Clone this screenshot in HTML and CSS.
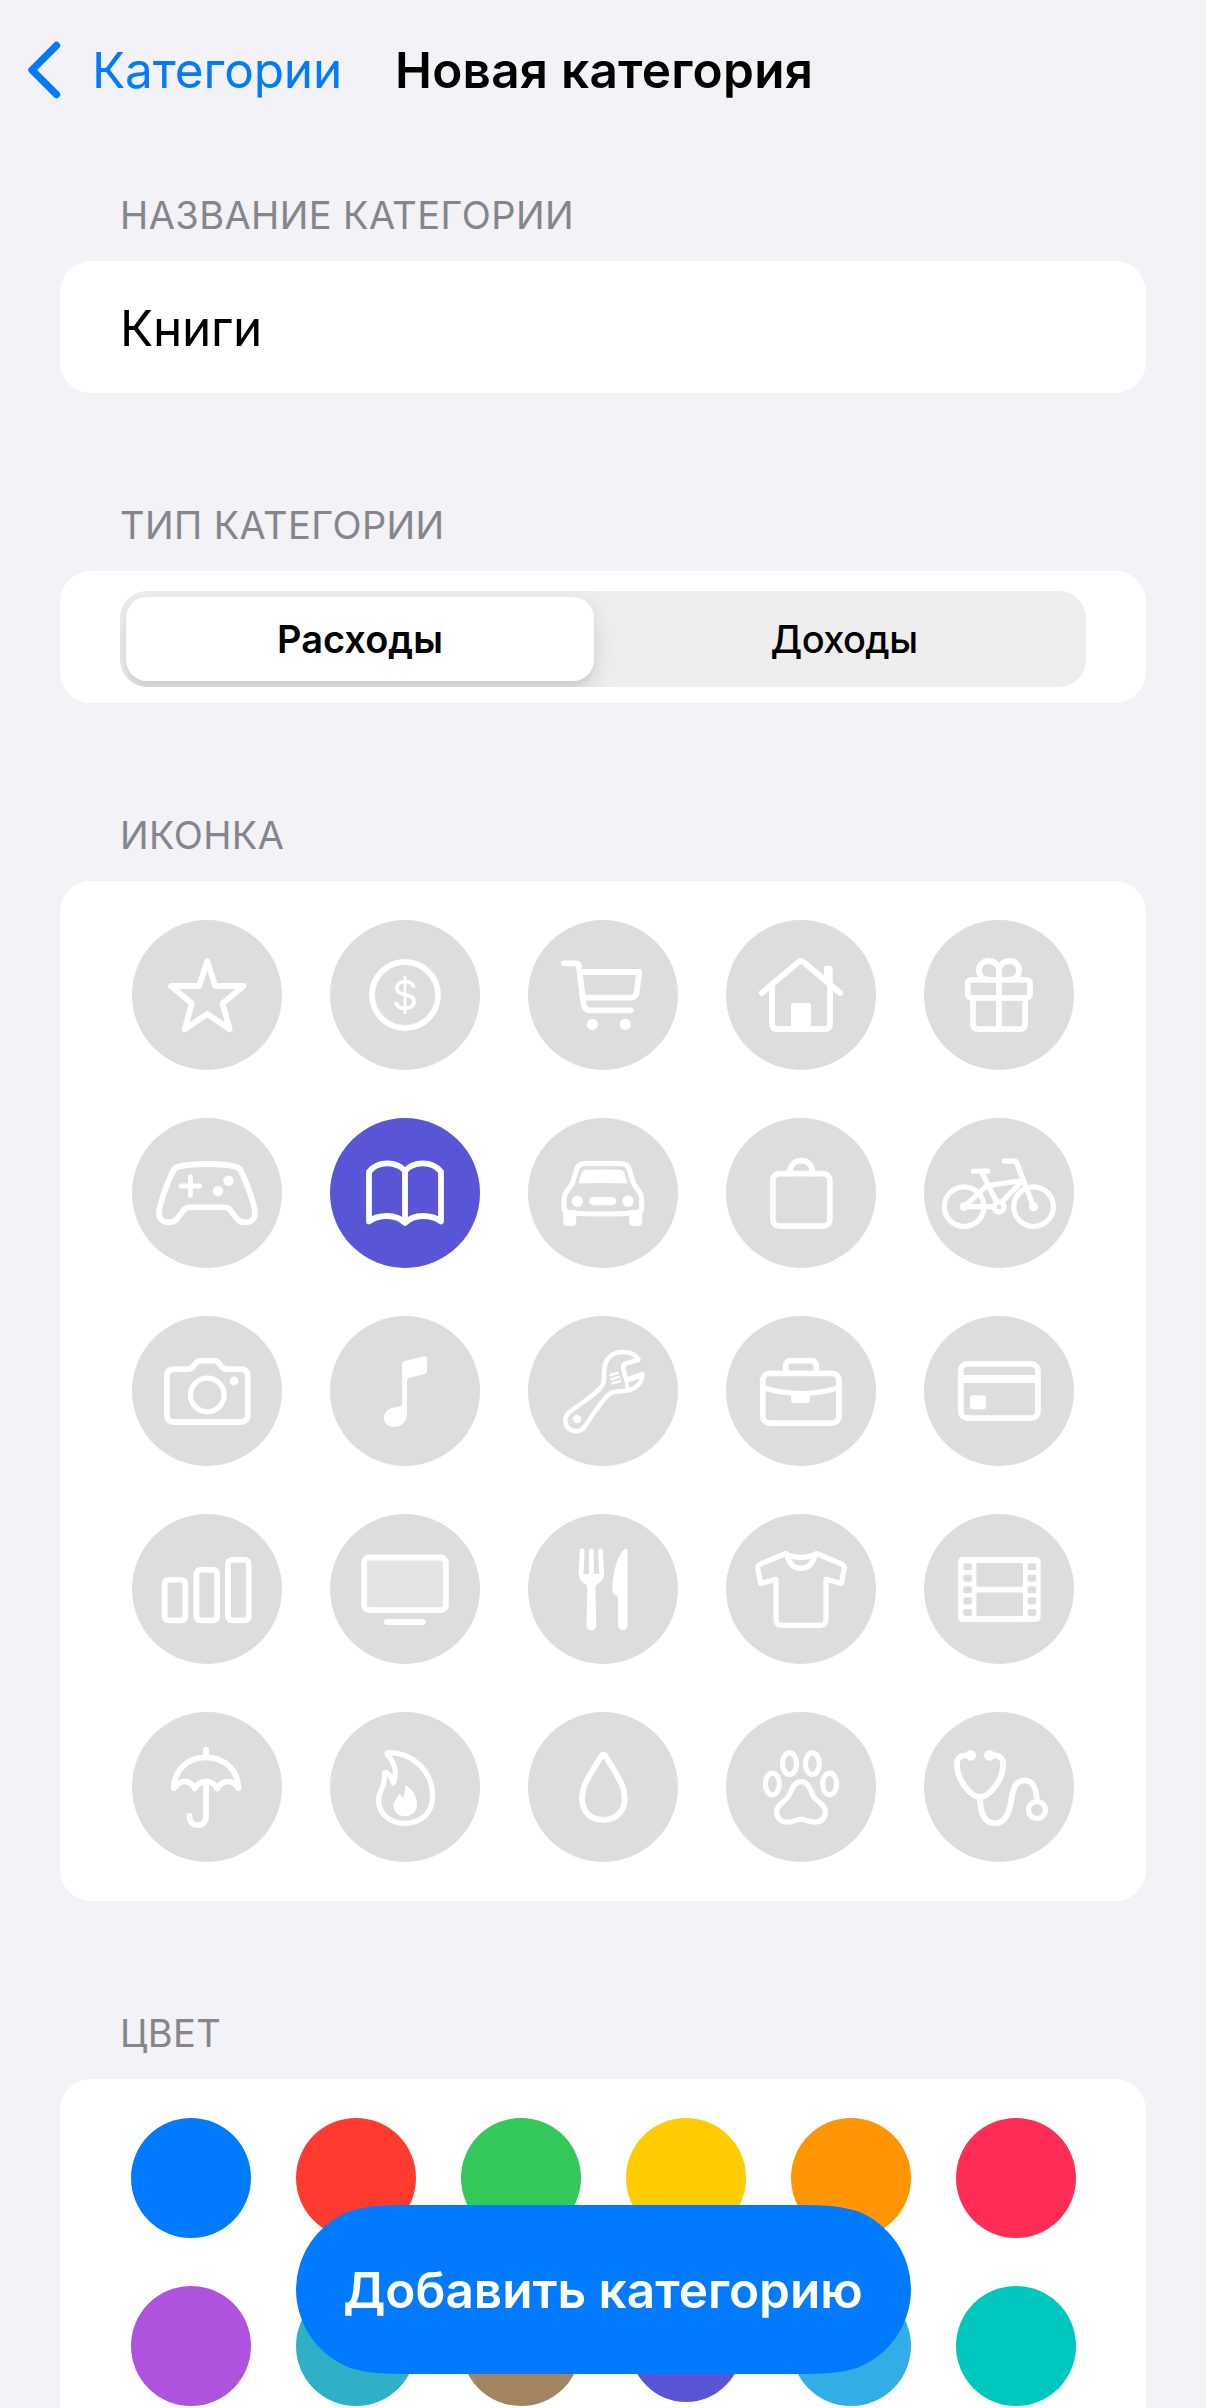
FILE: index.html
```html
<!DOCTYPE html>
<html lang="ru">
<head>
<meta charset="utf-8">
<title>Новая категория</title>
<link rel="stylesheet" href="styles.css">
</head>
<body>
<div class="screen">
  <header class="nav">
    <a class="back">
      <svg class="chevron" viewBox="0 0 34 60"><path d="M28.5 5.5 L4 30 L28.5 54.5"/></svg>
      <span class="back-label">Категории</span>
    </a>
    <h1 class="title">Новая категория</h1>
  </header>

  <section class="group">
    <h2 class="caption">НАЗВАНИЕ КАТЕГОРИИ</h2>
    <div class="card field"><span class="field-value">Книги</span></div>
  </section>

  <section class="group">
    <h2 class="caption">ТИП КАТЕГОРИИ</h2>
    <div class="card segment-card">
      <div class="segmented">
        <div class="segment selected"><span>Расходы</span></div>
        <div class="segment"><span>Доходы</span></div>
      </div>
    </div>
  </section>

  <section class="group">
    <h2 class="caption">ИКОНКА</h2>
    <div class="card icon-grid">
      <svg class="icon" viewBox="0 0 150 150"><path d="M75.2 41.2 L83.2 66 H111.5 L90.6 83.5 L97.7 109.4 L75.2 93.8 L52.7 109.4 L59.8 83.5 L38.9 66 H67.2 Z"/></svg>
      <svg class="icon" viewBox="0 0 150 150"><circle cx="75" cy="75" r="33"/><text class="currency" x="75" y="90" text-anchor="middle">$</text></svg>
      <svg class="icon" viewBox="0 0 150 150"><path d="M35.9 43.3 H48.5 Q50.3 43.3 50.6 45 L55.6 84 Q56.6 90.3 62 90.3 H102.8 M53.6 52 H111.2 L108.7 72 Q107.9 77.7 102.5 77.7 H57"/><circle class="solid" cx="64.4" cy="104.4" r="5.6"/><circle class="solid" cx="97.3" cy="104.4" r="5.6"/></svg>
      <svg class="icon" viewBox="0 0 150 150"><path d="M35.8 73 L72.6 42 Q75 40 77.4 42 L114.2 73 M46 66 V104 Q46 109 51 109 H99 Q104 109 104 104 V66"/><path class="solid" d="M65 109 V85 Q65 83 67 83 H83 Q85 83 85 85 V109 Z M98 58 V48 Q98 45.7 100.3 45.7 H104.4 Q106.7 45.7 106.7 48 V68 Z"/></svg>
      <svg class="icon" viewBox="0 0 150 150"><rect x="43.7" y="59.8" width="62.3" height="18" rx="3.5"/><path d="M48.9 78 V103.5 Q48.9 109.2 54.5 109.2 H95.5 Q101.1 109.2 101.1 103.5 V78 M75 109 V51 C75 44.6 70 41 64.6 41 C59 41 54.9 45.2 54.9 50.3 C54.9 55.6 58.6 59.7 64.6 59.7 M75 51 C75 44.6 80 41 85.4 41 C91 41 95.1 45.2 95.1 50.3 C95.1 55.6 91.4 59.7 85.4 59.7"/></svg>

      <svg class="icon" viewBox="0 0 150 150"><path d="M75 46 C62 46 52 47 45.5 49 Q42.3 50.2 40.7 53.7 C36.5 63 32.8 72 30.7 79 C28.5 86 27 91.5 27 95 C27 101 31 104.4 37 104.4 C41 104.4 43.6 102.8 45.5 100.3 L52 91.8 Q54 89.3 57 89.3 H93 Q96 89.3 98 91.8 L104.5 100.3 C106.4 102.8 109 104.4 113 104.4 C119 104.4 123 101 123 95 C123 91.5 121.5 86 119.3 79 C117.2 72 113.5 63 109.3 53.7 Q107.7 50.2 104.5 49 C98 47 88 46 75 46 Z"/><path class="plus" d="M49 68 H67.7 M58.4 58.6 V77.6"/><circle class="solid" cx="96.4" cy="62.8" r="5.2"/><circle class="solid" cx="86" cy="73.1" r="5.2"/></svg>
      <svg class="icon active" viewBox="0 0 150 150"><path d="M75 53 C71 48 65 45.3 57.3 45.3 C49 45.3 43 48.5 39 53.7 V103.4 C43.5 99.7 50 98 57.3 98 C64 98 70.5 100.3 75 105 C79.5 100.3 86 98 92.7 98 C100 98 106.5 99.7 111 103.4 V53.7 C107 48.5 101 45.3 92.7 45.3 C85 45.3 79 48 75 53 Z M75 53 V104"/></svg>
      <svg class="icon" viewBox="0 0 150 150"><path class="thin" d="M57 45.6 H93 C97.5 45.6 99.7 47.2 100.9 50.5 L105.3 64.5 C106.4 68.5 111.5 72 113 77.5 Q113.7 80 113.7 84 V90 Q113.7 93.5 110 94.2 C100 96.5 50 96.5 40 94.2 Q36 93.5 36 90 V84 Q36 80 36.7 77.5 C38.5 72 43.4 68.5 44.5 64.5 L49 50.5 C50.2 47.2 52.5 45.6 57 45.6 Z"/><path class="solid" d="M50.3 65.5 L53.5 55 Q54.3 52 57.5 51.8 Q75 51 92 51.8 Q95.5 52 96.3 55 L99.5 65.5 Q75 64.5 50.3 65.5 Z M35.2 92 H48.2 V103.5 Q48.2 108 43.7 108 H39.7 Q35.2 108 35.2 103.5 Z M101.2 92 H114.2 V103.5 Q114.2 108 109.7 108 H105.7 Q101.2 108 101.2 103.5 Z"/><rect class="solid" x="61.2" y="79" width="27" height="8.2" rx="4.1"/><circle class="solid" cx="49.3" cy="83.3" r="5.7"/><circle class="solid" cx="100" cy="83.3" r="5.7"/></svg>
      <svg class="icon" viewBox="0 0 150 150"><rect x="46.8" y="55.7" width="57" height="52.5" rx="6.5"/><path d="M63.7 55.5 C63.7 47.5 68.5 42.7 75.2 42.7 C82 42.7 86.5 47.5 86.5 55.5"/></svg>
      <svg class="icon" viewBox="0 0 150 150"><g class="thin"><circle cx="40.1" cy="88.7" r="19.8"/><circle cx="109.6" cy="88.7" r="19.8"/><circle cx="75" cy="88.9" r="5"/><path d="M80.3 43.1 H90.5 Q92 43.1 92.6 44.6 L109.6 88.7 M49.5 53.2 H63.7 M57.5 54 L73 84.5 M62.5 67.7 L98.5 62.6 L77.5 84.5 M63.3 67.3 L40.1 88.7 H68.5"/></g><circle class="solid" cx="40.1" cy="88.7" r="4.4"/><circle class="solid" cx="109.6" cy="88.7" r="4.6"/></svg>

      <svg class="icon" viewBox="0 0 150 150"><path d="M42 53.2 H55.5 Q59 53.2 61 50.7 L64 47 Q66 44.7 69 44.7 H81.6 Q84.6 44.7 86.6 47 L89.6 50.7 Q91.6 53.2 95 53.2 H108.5 Q115.7 53.2 115.7 60 V99 Q115.7 106 108.5 106 H42 Q34.9 106 34.9 99 V60 Q34.9 53.2 42 53.2 Z"/><circle class="thin" cx="75.3" cy="79" r="16.8"/><circle class="solid" cx="102" cy="65" r="4.4"/></svg>
      <svg class="icon" viewBox="0 0 150 150"><path class="solid" d="M72 49 Q72 45.7 75 44.9 L94 40.3 Q97 39.6 97 42.5 V54.5 Q97 57.3 94.5 58 L79.5 61.7 Q77 62.4 77 65 V97 C77 105.5 72 111 64 111 C58 111 54 107.5 54 102 C54 96 58 92.8 63 91.8 L69 90.5 Q72 90 72 87.5 Z"/></svg>
      <svg class="icon" viewBox="0 0 150 150"><path class="wrench" d="M110.5 43.7 C107.5 38.5 101.5 36 95 36 C84 36 77 43 76.3 53 L75.8 65 Q75.6 68.5 72.5 71.8 C60 84.5 49 89.5 41 96.5 C35.5 101.5 36.5 109.5 41.5 113 C47 116.8 54 115.5 57.5 109.5 C64 99.5 72 88 78.5 80.5 C83.5 74.5 89 75.8 97 74.8 C108 73.5 114.5 67 114.3 57.8 L100.5 62.8 Q97.8 63.2 97 59.5 L95.2 52 Q94.6 48.3 98.5 47.2 Z"/><path class="jaw" d="M97.2 59 L99.6 73.5 M98.5 65.5 L112.5 60.5"/><path class="thread" d="M82.6 59 L89.7 57 M83.6 63.3 L90.8 61 M84.8 67.3 L92 65.2"/><circle class="solid" cx="48.9" cy="103" r="4.2"/></svg>
      <svg class="icon" viewBox="0 0 150 150"><rect x="36.8" y="57.3" width="76.2" height="49.9" rx="7"/><path d="M59.7 56 V50.5 Q59.7 44.7 65.5 44.7 H84.5 Q90.2 44.7 90.2 50.5 V56"/><path class="thin" d="M37.5 71.8 Q75 83.5 112.5 71.8"/><path class="solid" d="M65 77 H84 V83.5 Q84 87 80.5 87 H68.5 Q65 87 65 83.5 Z"/></svg>
      <svg class="icon" viewBox="0 0 150 150"><rect x="36.8" y="47.9" width="77.1" height="54.3" rx="6.5"/><rect class="solid" x="36.8" y="59" width="77" height="8"/><rect class="solid" x="46" y="79.2" width="16" height="14" rx="3"/></svg>

      <svg class="icon" viewBox="0 0 150 150"><rect x="32.6" y="65.9" width="20.8" height="40.4" rx="4"/><rect x="64.4" y="55.9" width="20.8" height="50.4" rx="4"/><rect x="95.9" y="45.9" width="20.8" height="60.4" rx="4"/></svg>
      <svg class="icon" viewBox="0 0 150 150"><rect class="display" x="34.1" y="43.5" width="81.8" height="52.7" rx="5"/><rect class="solid" x="54" y="105" width="41.7" height="6" rx="3"/></svg>
      <svg class="icon" viewBox="0 0 150 150"><path class="tines" d="M54.2 37 L53 60 M63.3 37 V60 M72.5 37 L73.7 60"/><path class="solid" d="M51 60 C51 66 54.5 68.5 57.5 70.3 Q59.5 71.5 59.4 74 L58.5 111.5 a4.9 4.9 0 0 0 9.8 0 L67.4 74 Q67.3 71.5 69.3 70.3 C72.3 68.5 75.8 66 75.8 60 Z M99.5 38 Q99.5 33.5 96.5 35.2 C90.5 40 84.5 57 84.5 76 C84.5 79 86 80 88 81.3 Q90 82.5 90 85 V111.5 a4.75 4.75 0 0 0 9.5 0 Z"/></svg>
      <svg class="icon" viewBox="0 0 150 150"><path class="thin" d="M59.5 39.5 L34.5 50 Q31.3 51.5 31.8 54.8 L34.7 69.5 L50 65.3 V105 Q50 111.3 56 111.3 H94 Q100 111.3 100 105 V65.3 L115.3 69.5 L118.2 54.8 Q118.7 51.5 115.5 50 L90.5 39.5 C86 42.6 81 43.3 75 43.3 S64 42.6 59.5 39.5 Z M61 41 C63 50 68 54.4 75 54.4 S87 50 89 41"/></svg>
      <svg class="icon" viewBox="0 0 150 150"><path class="film" d="M39 43 H111.6 Q116.6 43 116.6 48 V103 Q116.6 108 111.6 108 H39 Q34 108 34 103 V48 Q34 43 39 43 Z"/><g class="hole"><rect x="52.4" y="49" width="46.6" height="23.8" rx="1.5"/><rect x="52.4" y="78.6" width="46.6" height="23.6" rx="1.5"/><rect x="39.3" y="49.2" width="8.6" height="7" rx="2"/><rect x="39.3" y="60.8" width="8.6" height="7" rx="2"/><rect x="39.3" y="72.2" width="8.6" height="7" rx="2"/><rect x="39.3" y="83.4" width="8.6" height="7" rx="2"/><rect x="39.3" y="95" width="8.6" height="7" rx="2"/><rect x="103.6" y="49.2" width="8.6" height="7" rx="2"/><rect x="103.6" y="60.8" width="8.6" height="7" rx="2"/><rect x="103.6" y="72.2" width="8.6" height="7" rx="2"/><rect x="103.6" y="83.4" width="8.6" height="7" rx="2"/><rect x="103.6" y="95" width="8.6" height="7" rx="2"/></g></svg>

      <svg class="icon" viewBox="0 0 150 150"><path d="M74 37.7 V45 M41.9 76.3 C42 58 56 45.4 74 45.4 C92 45.4 106.2 58 106.3 76.3 C103.5 71.6 100 69.6 95.7 69.6 C91 69.6 88 71.8 85.3 76.5 C82.5 71.8 79 69.6 74 69.6 C69 69.6 65.7 71.8 62.8 76.5 C60.5 71.8 57 69.6 52.6 69.6 C48.5 69.6 45 71.6 41.9 76.3 Z M74 70 V104.5 C74 110 70.5 113.2 65.7 113.2 C61 113.2 57.5 110 57.5 104"/></svg>
      <svg class="icon" viewBox="0 0 150 150"><path class="thin" d="M58 40.6 C80 40 102.5 57 102.5 84 C102.5 101.5 91 111.3 74.5 111.3 C59.5 111.3 48.7 101.5 48.7 88.5 C48.7 81 51.5 77.5 53.2 73.5 C55 69 54.2 65 54.5 61.5 Q54.7 59.8 56.5 60.6 Q61 63.5 63.3 71 C67.5 60.5 65.5 52 57.3 42.5 Q56.3 40.8 58 40.6 Z"/><path class="solid" d="M75 73 C82.5 76.5 87 84.5 87 92 C87 99.5 82.5 104.2 75 104.2 C68 104.2 63.5 99.5 63.5 93.5 C63.5 89 67.5 86.5 69.2 81.5 Q71.7 83.3 72.6 86.5 C74.8 82 75.3 77.5 75 73 Z"/></svg>
      <svg class="icon" viewBox="0 0 150 150"><path d="M73.9 43.3 Q75.3 41.8 76.8 43.3 C83 53 90.5 65 94 73 C95.8 77.5 96.7 82.5 96.7 86.5 C96.7 99 88.5 107.9 75.3 107.9 C62 107.9 54 99 54 86.5 C54 82.5 54.9 77.5 56.7 73 C60 65 68 53 73.9 43.3 Z"/></svg>
      <svg class="icon" viewBox="0 0 150 150"><g class="thin"><ellipse cx="63.5" cy="51.7" rx="7" ry="10.8"/><ellipse cx="86.4" cy="51.7" rx="7" ry="10.8"/><ellipse cx="46.4" cy="72" rx="7" ry="10.8"/><ellipse cx="103.6" cy="72" rx="7" ry="10.8"/><path d="M75 69.7 C70 69.7 67.5 73 65.5 78 C64 82 62.5 85.5 59 88.3 C54.5 92 50.6 94.5 50.6 100 C50.6 106.5 55.5 110.2 61.5 110.2 C67.5 110.2 70 107.2 75 107.2 C80 107.2 82.5 110.2 88.5 110.2 C94.5 110.2 99.4 106.5 99.4 100 C99.4 94.5 95.5 92 91 88.3 C87.5 85.5 86 82 84.5 78 C82.5 73 80 69.7 75 69.7 Z"/></g></svg>
      <svg class="icon" viewBox="0 0 150 150"><path d="M46.5 43.4 H41.5 C36.5 43.4 32.9 46.5 32.9 52 C32.9 68.5 47 85 56 85 C65 85 79.2 68.5 79.2 52 C79.2 46.5 75.6 43.4 70.6 43.4 H65.5 M56 85 C56 100 60 111.2 71 111.2 C82 111.2 85.5 100 87.3 88.5 C89 75.5 92 68.4 100.5 68.4 C108.5 68.4 112.5 76 112.7 88"/><circle class="thin" cx="113" cy="98" r="8.5"/><circle class="solid" cx="46.7" cy="43.3" r="5.4"/><circle class="solid" cx="65.4" cy="43.3" r="5.4"/></svg>
    </div>
  </section>

  <section class="group">
    <h2 class="caption">ЦВЕТ</h2>
    <div class="card color-grid">
      <span class="swatch blue"></span>
      <span class="swatch red"></span>
      <span class="swatch green"></span>
      <span class="swatch yellow"></span>
      <span class="swatch orange"></span>
      <span class="swatch pink"></span>
      <span class="swatch purple"></span>
      <span class="swatch teal"></span>
      <span class="swatch brown"></span>
      <span class="swatch indigo chosen"></span>
      <span class="swatch cyan"></span>
      <span class="swatch mint"></span>
    </div>
  </section>

  <button class="submit"><span>Добавить категорию</span></button>
</div>
</body>
</html>
```

FILE: styles.css
```css
* {
  box-sizing: border-box;
}

body {
  margin: 0;
  background: #f2f2f7;
  color: #000;
  font-family: Inter, "Liberation Sans", sans-serif;
}

.screen {
  position: relative;
  width: 1206px;
  height: 2408px;
  overflow: hidden;
}

/* Navigation bar */
.nav {
  display: flex;
  align-items: center;
  height: 140px;
  padding-left: 28px;
}

.back {
  display: flex;
  align-items: center;
  width: 367px;
  gap: 30px;
  color: #007aff;
}

.chevron {
  flex: none;
  width: 34px;
  height: 60px;
  fill: none;
  stroke: #007aff;
  stroke-width: 7.4;
  stroke-linecap: round;
  stroke-linejoin: round;
}

.back-label,
.title,
.field-value,
.submit {
  font-size: 49.5px;
  line-height: 60px;
  white-space: nowrap;
}

.back-label {
  letter-spacing: -0.15px;
}

.title {
  margin: 0;
  font-weight: 600;
  letter-spacing: 0.25px;
}

/* Grouped sections */
.group {
  padding: 0 60px;
}

.caption {
  height: 121px;
  margin: 0;
  padding: 52px 0 0 60px;
  color: #85858b;
  font-size: 38px;
  font-weight: 400;
  letter-spacing: 0.4px;
  line-height: 46px;
  white-space: nowrap;
}

.group + .group {
  margin-top: 57px;
}

.card {
  background: #fff;
  border-radius: 31px;
}

.field {
  display: flex;
  align-items: center;
  height: 132px;
  padding: 1px 60px 0;
}

.field-value {
  letter-spacing: -0.3px;
}

.segment-card {
  height: 132px;
  padding: 20px 60px 16px;
}

.segmented {
  display: flex;
  height: 96px;
  padding: 6px;
  border-radius: 27px;
  background: #eee;
  overflow: hidden;
}

.segment {
  display: flex;
  flex: 1;
  align-items: center;
  justify-content: center;
  padding-left: 14px;
  font-size: 38px;
  font-weight: 500;
  letter-spacing: -0.6px;
  line-height: 46px;
}

.segment.selected {
  flex: none;
  width: 468px;
  padding-left: 0;
  border-radius: 21px;
  background: #fff;
  box-shadow: 0 9px 24px rgba(0, 0, 0, 0.12), 0 6px 3px rgba(0, 0, 0, 0.04);
  font-weight: 600;
  letter-spacing: 0;
}

/* Icon picker */
.icon-grid {
  display: grid;
  grid-template-columns: repeat(5, 150px);
  gap: 48px;
  padding: 39px 72px;
}

.icon {
  display: block;
  width: 150px;
  height: 150px;
  border-radius: 50%;
  background: #dddddf;
  fill: none;
  stroke: #fff;
  stroke-width: 5.8;
  stroke-linecap: round;
  stroke-linejoin: round;
}

.icon.active {
  background: #5856d6;
}

.icon .thin {
  stroke-width: 5.2;
}

.icon .plus {
  stroke-width: 4.9;
}

.icon .solid,
.icon .film {
  fill: #fff;
  stroke: none;
}

.icon .hole {
  fill: #dddddf;
  stroke: none;
}

.icon .display {
  fill: #e4e4e6;
}

.icon .wrench {
  stroke-width: 4.6;
}

.icon .jaw {
  stroke-width: 3.4;
}

.icon .thread {
  stroke-width: 2.6;
}

.icon .tines {
  stroke-width: 4.8;
}

.icon .currency {
  fill: #fff;
  stroke: none;
  font-size: 41px;
  font-weight: 400;
}

/* Colour picker */
.color-grid {
  display: grid;
  grid-template-columns: repeat(6, 120px);
  gap: 48px 45px;
  height: 400px;
  padding: 39px 71px;
  align-content: start;
}

.swatch {
  width: 120px;
  height: 120px;
  border-radius: 50%;
}

.chosen {
  border: 4px solid #fff;
}

.blue { background: #007aff; }
.red { background: #ff3b30; }
.green { background: #34c759; }
.yellow { background: #ffcc00; }
.orange { background: #ff9500; }
.pink { background: #ff2d55; }
.purple { background: #af52de; }
.teal { background: #30b0c7; }
.brown { background: #a2845e; }
.indigo { background: #5856d6; }
.cyan { background: #32ade6; }
.mint { background: #00c7be; }

/* Floating action over the scrolling form */
.submit {
  position: absolute;
  top: 2205px;
  left: 296px;
  width: 615px;
  height: 169px;
  padding: 1px 1px 0 0;
  border: 0;
  background: #007aff;
  color: #fff;
  font-family: inherit;
  font-weight: 600;
  clip-path: path("M129 0 H486 C523 0 541.6 0 561.7 6.3 A84.5 84.5 0 0 1 615 84.5 A84.5 84.5 0 0 1 561.7 162.7 C541.6 169 523 169 486 169 H129 C92 169 73.4 169 53.3 162.7 A84.5 84.5 0 0 1 0 84.5 A84.5 84.5 0 0 1 53.3 6.3 C73.4 0 92 0 129 0 Z");
}
```
